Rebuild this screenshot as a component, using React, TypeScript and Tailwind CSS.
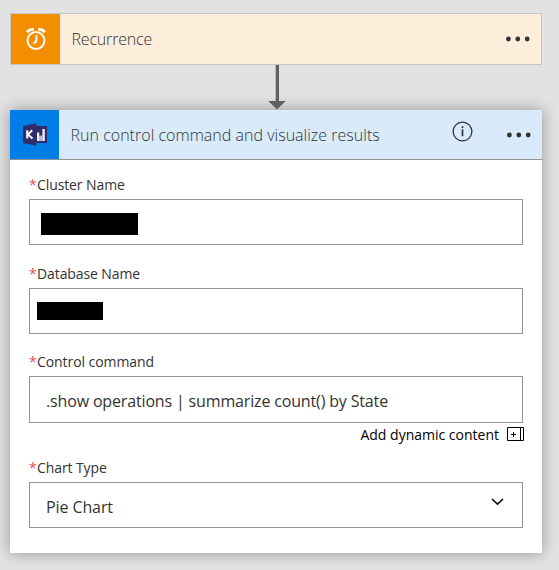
import type { ReactNode } from "react";

function Dots() {
  return (
    <svg width="24" height="6" viewBox="0 0 24 6" fill="#333333">
      <circle cx="2.4" cy="3" r="2.4" />
      <circle cx="11.8" cy="3" r="2.4" />
      <circle cx="21.2" cy="3" r="2.4" />
    </svg>
  );
}

function AlarmIcon() {
  return (
    <svg width="20" height="24" viewBox="0 0 20 24" fill="none" stroke="white">
      <circle cx="10" cy="13.5" r="8.5" strokeWidth="1.9" />
      <path d="M10.4 8.3v4.4q0 2.6-3 3.6" strokeWidth="1.9" />
      <path d="M1.2 5.3Q3.2 1.9 7.8 2.4M18.8 5.3Q16.8 1.9 12.2 2.4" strokeWidth="2.8" />
    </svg>
  );
}

function KustoIcon() {
  return (
    <svg className="mb-px ml-px" width="24" height="23" viewBox="0 0 24 23">
      <path d="M12 3h12v17H12z" fill="#302c69" />
      <path d="M14 9.5h2.2V18H14zM17 13h2v5h-2zM19.4 6h2.4v12h-2.4z" fill="#f0f0ff" />
      <path d="M15.8 12.5h4V18h-4z" fill="#bab8dc" />
      <path d="M0 3 13.3.3v22.4L0 20z" fill="#302c69" />
      <path d="M4.2 7.2v8.4M9.2 7.2 5 11.4l4.5 4.2" fill="none" stroke="white" strokeWidth="2" />
    </svg>
  );
}

function Label({ children, className }: { children: string; className: string }) {
  return (
    <div className="flex h-5 whitespace-nowrap text-[14px] leading-5 text-[#333]">
      <span className="w-2 text-[#e85050]">*</span>
      <span className={className}>{children}</span>
    </div>
  );
}

function Field({ children, className }: { children: ReactNode; className: string }) {
  return (
    <div className={`flex w-[494px] border border-[#949494] bg-white ${className}`}>
      {children}
    </div>
  );
}

export default function App() {
  return (
    <main className="h-[570px] w-[559px] overflow-hidden bg-[#e2e2e2] pl-[10px] pt-[13px] font-['Open_Sans','Noto_Sans',sans-serif]">
      <section className="flex h-[52px] w-[532px] items-center border border-[#c5c5c5] bg-[#fdeedb]">
        <div className="flex h-[50px] w-[49px] items-center justify-center bg-[#f28e00]">
          <AlarmIcon />
        </div>
        <h2 className="ml-[11.5px] flex-1 whitespace-nowrap text-[16px] font-[350] leading-6 tracking-[-0.18px] text-[#333]">
          Recurrence
        </h2>
        <div className="mr-[11px]">
          <Dots />
        </div>
      </section>
      <svg className="ml-[258px] block" width="18" height="45" viewBox="0 0 18 45" fill="#606060">
        <path d="M7.7 0h3.3v36H7.7zM.3 36h17.4L9 44.5z" />
      </svg>
      <section className="h-[443px] w-[532px] bg-white shadow-[0_0_14px_rgba(0,0,0,0.35)]">
        <header className="flex h-[50px] items-center border-b border-[#949494] bg-[#d9ebfa]">
          <div className="flex h-[49px] w-[49px] items-center justify-center bg-[#007ee5]">
            <KustoIcon />
          </div>
          <h2 className="ml-[11.5px] flex-1 whitespace-nowrap pt-px text-[16px] font-[350] leading-6 tracking-[0.02px] text-[#333]">
            Run control command and visualize results
          </h2>
          <svg className="mb-[6px] mr-[34.5px]" width="21" height="21" viewBox="0 0 21 21" fill="none" stroke="#333">
            <circle cx="10.5" cy="10.5" r="9.4" strokeWidth="1.3" />
            <path d="M10.5 5.2v1.7M10.5 8.3v7" strokeWidth="1.7" />
          </svg>
          <div className="mr-[11px]">
            <Dots />
          </div>
        </header>
        <div className="pl-[19px] pt-[15px]">
          <Label className="tracking-[-0.1px]">Cluster Name</Label>
          <Field className="mt-1 h-[46px] pl-[11px] pt-[13px]">
            <div className="h-[22px] w-[97px] bg-black" />
          </Field>
          <div className="mt-[19px]">
            <Label className="tracking-[-0.1px]">Database Name</Label>
          </div>
          <Field className="mt-1 h-[46px] pl-[7px] pt-[13px]">
            <div className="h-[18px] w-[66px] bg-black" />
          </Field>
          <div className="mt-[18px]">
            <Label className="tracking-[-0.07px]">Control command</Label>
          </div>
          <Field className="mt-1 h-[47px] items-center pl-4 pt-[2px]">
            <span className="whitespace-nowrap text-[16px] tracking-[-0.155px] text-[#333]">
              .show operations | summarize count() by State
            </span>
          </Field>
          <div className="flex h-[22px] w-[495px] items-center justify-end gap-2 text-[14px] text-black">
            <span className="whitespace-nowrap">Add dynamic content</span>
            <svg width="17" height="14" viewBox="0 0 17 14" fill="none" stroke="black">
              <path d="M.5.5h16v13H.5zM13.5.5v13M4 7.5h5M6.5 5v5" />
            </svg>
          </div>
          <div className="mt-[13px]">
            <Label className="tracking-[-0.1px]">Chart Type</Label>
          </div>
          <Field className="mt-1 h-[46px] items-center justify-between pl-4 pr-[18px]">
            <span className="whitespace-nowrap pt-1 text-[16px] tracking-[-0.1px] text-[#333]">Pie Chart</span>
            <svg className="mb-[6px]" width="13" height="8" viewBox="0 0 13 8" fill="none" stroke="#111" strokeWidth="1.7">
              <path d="m1 1 5.5 5.2L12 1" />
            </svg>
          </Field>
        </div>
      </section>
    </main>
  );
}
